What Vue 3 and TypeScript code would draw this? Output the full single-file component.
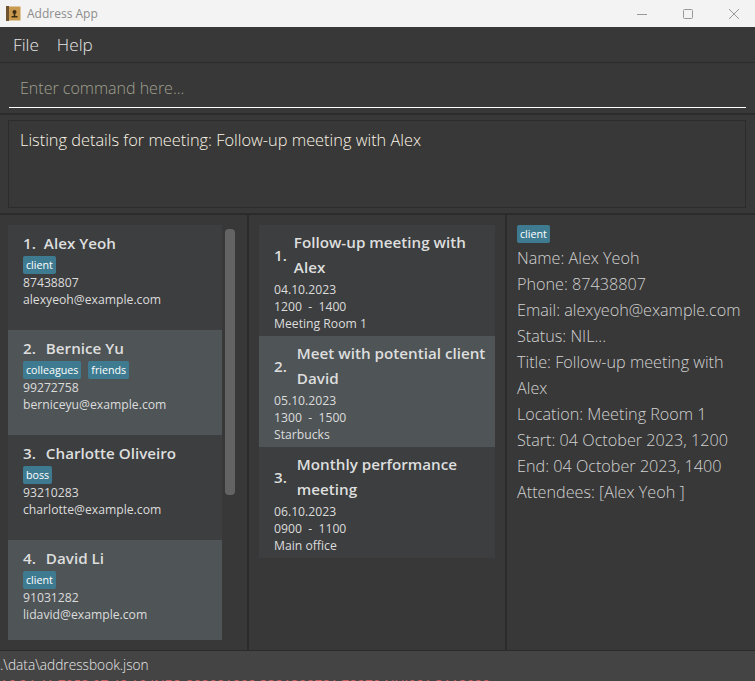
<script setup lang="ts">
interface Person { name: string; tags: string[]; phone: string; email: string }
interface Meeting { title: string[]; date: string; time: string; place: string }
const people: Person[] = [
  { name: 'Alex Yeoh', tags: ['client'], phone: '87438807', email: 'alexyeoh@example.com' },
  { name: 'Bernice Yu', tags: ['colleagues', 'friends'], phone: '99272758', email: 'berniceyu@example.com' },
  { name: 'Charlotte Oliveiro', tags: ['boss'], phone: '93210283', email: 'charlotte@example.com' },
  { name: 'David Li', tags: ['client'], phone: '91031282', email: 'lidavid@example.com' },
]
const meetings: Meeting[] = [
  { title: ['Follow-up meeting with', 'Alex'], date: '04.10.2023', time: '1200  -  1400', place: 'Meeting Room 1' },
  { title: ['Meet with potential client', 'David'], date: '05.10.2023', time: '1300  -  1500', place: 'Starbucks' },
  { title: ['Monthly performance', 'meeting'], date: '06.10.2023', time: '0900  -  1100', place: 'Main office' },
]
const details: string[] = [
  'Name: Alex Yeoh', 'Phone: 87438807', 'Email: alexyeoh@example.com', 'Status: NIL...',
  'Title: Follow-up meeting with', 'Alex', 'Location: Meeting Room 1',
  'Start: 04 October 2023, 1200', 'End: 04 October 2023, 1400', 'Attendees: [Alex Yeoh ]',
]
</script>

<template>
  <div class="app">
    <header class="titlebar">
      <svg class="appicon" width="15" height="15" viewBox="0 0 15 15">
        <rect x="0.5" y="0.5" width="14" height="14" fill="#c99a4e" />
        <rect x="0" y="0" width="3" height="15" fill="#6f5330" />
        <circle cx="8.5" cy="6" r="2" fill="#3a2a14" />
        <path d="M7.7 7.5h1.6v2.5h2.2v1.5h-6v-1.5h2.2z" fill="#3a2a14" />
      </svg>
      <span class="apptitle">Address App</span>
      <div class="winbtns">
        <svg width="12" height="12" viewBox="0 0 12 12"><path d="M1 6.5h10" stroke="#999" stroke-width="1" /></svg>
        <svg width="12" height="12" viewBox="0 0 12 12"><rect x="1.5" y="1.5" width="9" height="9" rx="1" fill="none" stroke="#999" stroke-width="1" /></svg>
        <svg width="12" height="12" viewBox="0 0 12 12"><path d="M1 1l10 10M11 1L1 11" stroke="#999" stroke-width="1" /></svg>
      </div>
    </header>

    <nav class="menubar">
      <span>File</span>
      <span>Help</span>
    </nav>

    <section class="command">
      <div class="cmdinput">Enter command here...</div>
    </section>

    <section class="result">
      <div class="resultbox">Listing details for meeting: Follow-up meeting with Alex</div>
    </section>

    <main class="panes">
      <div class="pane people">
        <div class="cardlist">
          <article v-for="(p, i) in people" :key="p.name" class="card pcard" :class="{ alt: i % 2 === 1 }">
            <h3 class="pname"><span class="pidx" :class="{ first: i === 0 }">{{ i + 1 }}.</span>{{ p.name }}</h3>
            <div class="tags"><span v-for="t in p.tags" :key="t" class="tag">{{ t }}</span></div>
            <div class="small">{{ p.phone }}</div>
            <div class="small">{{ p.email }}</div>
          </article>
        </div>
        <div class="scrolltrack"><div class="thumb"></div></div>
      </div>

      <div class="pane meetings">
        <article v-for="(m, i) in meetings" :key="m.date" class="card mcard" :class="{ alt: i % 2 === 1 }">
          <div class="mhead">
            <span class="midx" :class="{ first: i === 0 }">{{ i + 1 }}.</span>
            <div class="mtitle"><div v-for="l in m.title" :key="l">{{ l }}</div></div>
          </div>
          <div class="small">{{ m.date }}</div>
          <div class="small pre">{{ m.time }}</div>
          <div class="small">{{ m.place }}</div>
        </article>
      </div>

      <aside class="pane detail">
        <div class="tags"><span class="tag">client</span></div>
        <div v-for="d in details" :key="d" class="dline">{{ d }}</div>
      </aside>
    </main>

    <footer class="status">
      <div class="spath">.\data\addressbook.json</div>
      <div class="serr">16:24:41.7053 07:48:19 INFO 292921292 3321302781 78270 NUI921 3112020</div>
    </footer>
  </div>
</template>

<style>
html, body { margin: 0; padding: 0; background: #383838; }
</style>

<style scoped>
.app {
  width: 755px;
  height: 681px;
  overflow: hidden;
  display: flex;
  flex-direction: column;
  background: #383838;
  font-family: "Open Sans", "Noto Sans", sans-serif;
  color: #d6d6d6;
}
.titlebar {
  height: 27px;
  flex: none;
  display: flex;
  align-items: center;
  background: #f3f3f3;
  padding-left: 6px;
}
.appicon { flex: none; }
.apptitle {
  margin-left: 6px;
  font-size: 12px;
  color: #8c8c8c;
}
.winbtns {
  margin-left: auto;
  display: flex;
  align-items: center;
  gap: 34px;
  margin-right: 15px;
}
.menubar {
  height: 36px;
  flex: none;
  box-sizing: border-box;
  display: flex;
  align-items: center;
  gap: 18px;
  padding-left: 13px;
  font-size: 17.2px;
  color: #e6e6e6;
  border-bottom: 1px solid #2c2c2c;
  font-weight: 300;
}
.command {
  height: 52px;
  flex: none;
  box-sizing: border-box;
  padding: 0 9px;
  border-bottom: 2px solid #2b2b2b;
}
.cmdinput {
  height: 45px;
  box-sizing: border-box;
  padding: 13px 0 0 11px;
  border-bottom: 1px solid #fff;
  font-size: 16px;
  line-height: 24px;
  font-weight: 300;
  color: #a0a090;
}
.result {
  height: 100px;
  flex: none;
  box-sizing: border-box;
  padding: 5px 9px 5px 8px;
  border-bottom: 2px solid #2b2b2b;
}
.resultbox {
  height: 88px;
  box-sizing: border-box;
  border: 1px solid #2c2c2c;
  padding: 7px 11px;
  font-size: 16.35px;
  line-height: 24px;
  font-weight: 300;
  color: #fbf5e6;
}
.panes {
  flex: 1;
  min-height: 0;
  display: grid;
  grid-template-columns: 249px 258px 248px;
}
.pane {
  box-sizing: border-box;
  min-width: 0;
}
.people {
  display: flex;
  border-right: 2px solid #2b2b2b;
  padding: 10px 0 0 8px;
}
.cardlist { width: 214px; flex: none; }
.scrolltrack { flex: none; margin-left: 3px; padding-top: 4px; }
.thumb {
  width: 10px;
  height: 266px;
  border-radius: 4px;
  background: #636363;
}
.meetings {
  border-right: 2px solid #2b2b2b;
  padding: 10px 10px 0 10px;
}
.detail { padding: 10px 0 0 10px; }
.card { box-sizing: border-box; background: #3c3e3f; }
.card.alt { background: #4f5557; }
.pcard { height: 105px; padding: 7px 0 0 15px; }
.pcard:last-child { height: 100px; }
.pname {
  margin: 0;
  font-size: 15.2px;
  line-height: 23px;
  font-weight: 600;
  color: #dedede;
}
.pidx { margin-right: 10px; }
.pidx.first { margin-right: 8px; }
.tags { display: flex; gap: 7px; height: 18px; margin-top: 1px; }
.tag {
  height: 18px;
  box-sizing: border-box;
  padding: 0 3px;
  border-radius: 2px;
  background: #3e7b91;
  color: #fff;
  font-size: 10.7px;
  line-height: 18px;
}
.small {
  font-size: 12.2px;
  line-height: 17px;
  color: #dcdcdc;
}
.pre { white-space: pre; }
.mcard { height: 111px; padding: 5px 0 0 15px; }
.mhead { display: flex; align-items: center; margin-bottom: 1px; }
.midx { font-size: 15.2px; font-weight: 600; color: #dedede; margin-right: 10px; }
.midx.first { margin-right: 7px; }
.mtitle {
  font-size: 15.2px;
  line-height: 25px;
  font-weight: 600;
  color: #dedede;
  white-space: nowrap;
}
.dline {
  font-size: 16.2px;
  line-height: 26px;
  font-weight: 300;
  color: #d2d2d2;
  white-space: nowrap;
}
.detail .tags { margin: 0 0 2px; }
.status {
  height: 31px;
  flex: none;
  box-sizing: border-box;
  background: #444;
  border-top: 1px solid #2b2b2b;
  overflow: hidden;
  font-size: 13.7px;
  line-height: 16px;
  padding-top: 6px;
  font-weight: 300;
  color: #e8e8e8;
}
.serr { color: #c9605f; font-weight: 400; margin-top: 4px; }
</style>
